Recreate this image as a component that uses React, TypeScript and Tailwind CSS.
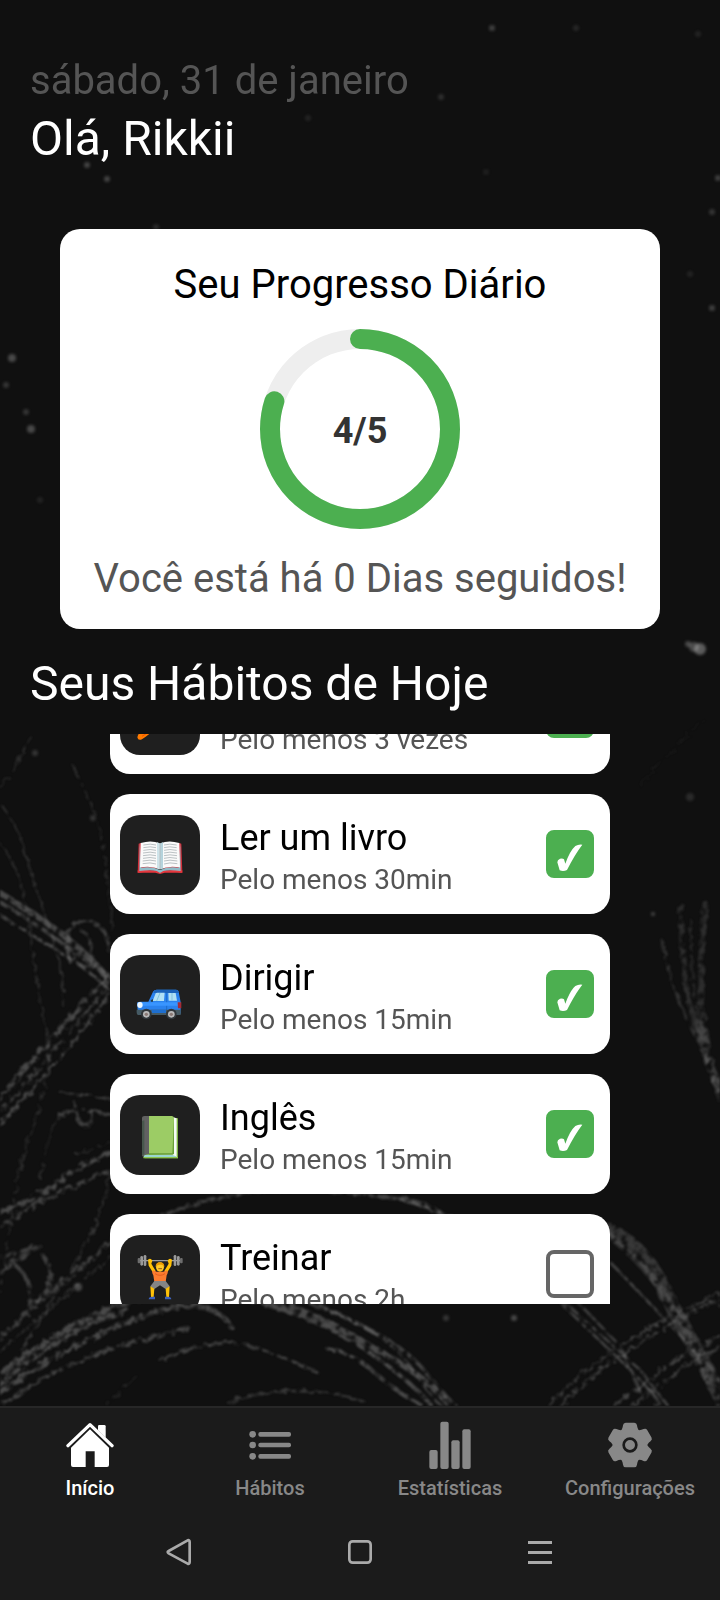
import React, { useLayoutEffect, useRef, useState } from 'react';

type Stroke = { d: string; w?: number; o?: number };

// Chalk lines on the blackboard behind the page
const strands: Stroke[] = [
  { d: 'M0 787 L15 768 L30 737', o: 0.35 },
  { d: 'M0 803 Q18 826 24 848 T43 909 T60 966 T63 1006', o: 0.35 },
  { d: 'M0 843 Q22 868 30 931 T46 1030 T36 1116 T13 1204 T0 1292', o: 0.3 },
  { d: 'M72 764 L87 795 Q102 826 106 866 T112 930', o: 0.3 },
  { d: 'M0 893 C30 912 80 940 112 984', w: 5, o: 0.6 },
  { d: 'M0 902 C30 918 70 950 112 978', w: 3, o: 0.55 },
  { d: 'M0 915 C30 936 75 956 112 992', w: 2, o: 0.6 },
  { d: 'M0 1098 Q40 1050 112 972', w: 4, o: 0.6 },
  { d: 'M0 1112 Q52 1056 112 980', w: 2, o: 0.5 },
  { d: 'M0 1124 Q56 1066 112 992', w: 2, o: 0.6 },
  { d: 'M70 962 C60 928 78 918 92 922 S108 940 109 950', w: 3, o: 0.5 },
  { d: 'M80 930 Q92 934 91 952 Q98 972 84 966 Q68 962 78 950', w: 2, o: 0.45 },
  { d: 'M60 1092 L110 1099', o: 0.5 },
  { d: 'M57 1118 Q72 1104 110 1115', w: 2, o: 0.55 },
  { d: 'M74 1102 C80 1132 92 1132 92 1114 M77 1120 Q88 1136 92 1112', w: 2, o: 0.5 },
  { d: 'M55 1122 L46 1150 L40 1178', o: 0.3 },
  { d: 'M0 1212 Q42 1196 58 1182 T112 1152', w: 4, o: 0.6 },
  { d: 'M0 1226 Q30 1206 56 1194 T112 1170', w: 3, o: 0.55 },
  { d: 'M76 1154 L110 1143', o: 0.4 },
  { d: 'M110 1174 Q100 1222 78 1258 T20 1352', o: 0.4 },
  { d: 'M0 1272 Q20 1254 37 1250 C56 1262 54 1298 30 1304 Q34 1280 14 1264', w: 3, o: 0.5 },
  { d: 'M0 1258 L40 1245', w: 2, o: 0.5 },
  { d: 'M0 1338 Q40 1300 72 1274 T112 1240 Q220 1180 330 1190 T440 1216', w: 4, o: 0.5 },
  { d: 'M0 1352 Q40 1316 112 1256', o: 0.4 },
  { d: 'M0 1376 Q54 1330 112 1308 C190 1274 280 1296 338 1328 S426 1376 450 1406', w: 5, o: 0.6 },
  { d: 'M0 1384 Q62 1332 126 1310', w: 4, o: 0.6 },
  { d: 'M0 1392 Q66 1346 138 1318 T232 1328', w: 4, o: 0.6 },
  { d: 'M4 1404 Q60 1362 134 1342 T180 1330', w: 3, o: 0.55 },
  { d: 'M250 1300 Q320 1318 366 1350 T432 1406', w: 3, o: 0.6 },
  { d: 'M320 1306 Q400 1340 424 1370 T456 1406', w: 3, o: 0.55 },
  { d: 'M310 1304 Q384 1328 410 1366 T442 1406', w: 2, o: 0.5 },
  { d: 'M160 1360 Q210 1338 240 1344 T318 1373', w: 2, o: 0.55 },
  { d: 'M324 1348 Q352 1352 374 1372 T420 1404', w: 3, o: 0.6 },
  { d: 'M228 1402 Q300 1380 364 1402', w: 2, o: 0.4 },
  { d: 'M106 1404 L136 1376', o: 0.25 },
  { d: 'M400 1200 Q470 1216 520 1264 T620 1360 T656 1406', w: 2, o: 0.5 },
  { d: 'M540 1280 L640 1370 L668 1406', w: 2, o: 0.5 },
  { d: 'M566 1290 L620 1346 L640 1392', w: 2, o: 0.45 },
  { d: 'M548 1406 Q586 1362 662 1322 T720 1296', w: 2, o: 0.5 },
  { d: 'M560 1406 Q600 1366 664 1328 T720 1306', w: 2, o: 0.5 },
  { d: 'M614 1406 L682 1356 L720 1336', w: 2, o: 0.55 },
  { d: 'M632 1406 L690 1362 L720 1348', w: 2, o: 0.5 },
  { d: 'M610 1262 Q652 1306 700 1356 T716 1406', w: 2, o: 0.5 },
  { d: 'M610 1231 Q642 1246 660 1282 T696 1350 T720 1396', w: 14, o: 0.42 },
  { d: 'M610 1236 Q646 1264 672 1306 T708 1380', w: 6, o: 0.35 },
  { d: 'M681 905 Q680 984 700 1041 T720 1100', w: 4, o: 0.3 },
  { d: 'M706 905 Q696 984 706 1040 T720 1082', w: 5, o: 0.3 },
  { d: 'M700 1020 Q704 1060 722 1090', w: 8, o: 0.35 },
  { d: 'M691 920 Q690 984 702 1040', w: 2, o: 0.25 },
  { d: 'M662 940 Q670 986 690 1026 T718 1092', w: 2, o: 0.35 },
  { d: 'M640 786 Q680 740 704 720', o: 0.1 },
];

// Dust on the blackboard: x, y, radius, opacity
const specks: number[][] = [
  [492, 28, 3, 0.25], [576, 28, 3, 0.12], [441, 97, 3, 0.16], [308, 118, 3, 0.1],
  [87, 165, 3, 0.28], [107, 179, 3, 0.28], [156, 227, 3, 0.14], [698, 34, 3, 0.1],
  [718, 178, 3, 0.25], [712, 212, 3, 0.2], [690, 274, 3, 0.1], [486, 172, 3, 0.08],
  [12, 358, 4, 0.3], [6, 385, 3, 0.2], [31, 429, 4, 0.3], [26, 412, 3, 0.2],
  [700, 649, 6, 0.4], [694, 647, 5, 0.3], [688, 644, 3, 0.3], [712, 308, 3, 0.25],
  [40, 500, 3, 0.1], [690, 797, 4, 0.14], [653, 914, 2, 0.3], [514, 1318, 3, 0.3],
  [446, 1318, 3, 0.2], [35, 753, 3, 0.2], [93, 818, 3, 0.2], [78, 1287, 4, 0.3],
];

const ChalkBoard = () => (
  <svg
    className="absolute inset-0 h-full w-full"
    viewBox="0 0 720 1406"
    preserveAspectRatio="xMidYMax slice"
    aria-hidden="true"
  >
    <defs>
      <filter id="chalk" x="0" y="0" width="720" height="1406" filterUnits="userSpaceOnUse">
        <feTurbulence type="fractalNoise" baseFrequency="0.14" numOctaves="3" seed="7" result="noise" />
        <feDisplacementMap in="SourceGraphic" in2="noise" scale="7" result="rough" />
        <feColorMatrix in="noise" type="matrix" values="0 0 0 0 0  0 0 0 0 0  0 0 0 0 0  0 3.5 0 0 -1" result="grain" />
        <feComposite in="rough" in2="grain" operator="in" />
        <feGaussianBlur stdDeviation="1" />
      </filter>
      <filter id="dust" x="0" y="0" width="720" height="1406" filterUnits="userSpaceOnUse">
        <feGaussianBlur stdDeviation="1.4" />
      </filter>
    </defs>
    <g filter="url(#chalk)" fill="none" stroke="#707070" strokeLinecap="round">
      {strands.map((s, i) => (
        <path key={i} d={s.d} strokeWidth={(s.w ?? 1) + 1} opacity={s.o} />
      ))}
    </g>
    <g filter="url(#dust)" fill="#cccccc">
      {specks.map(([x, y, r, o], i) => (
        <circle key={i} cx={x} cy={y} r={r} opacity={o} />
      ))}
    </g>
  </svg>
);

const CarrotIcon = () => (
  <svg viewBox="0 0 240 240" className="h-20 w-20" aria-hidden="true">
    <path d="M150 82 Q174 52 184 80 Q196 88 160 100Z" fill="#4caf50" />
    <path d="M52 187 Q58 160 128 94 Q150 82 158 100 Q160 116 140 130 Q90 178 66 193 Q54 198 52 187Z" fill="#ff7a00" />
    <path d="M66 184 L84 172" stroke="#e65100" strokeWidth="3" />
  </svg>
);

const BookIcon = () => (
  <svg viewBox="0 0 240 240" className="h-20 w-20" aria-hidden="true">
    <path d="M56 86 L62 84 L112 160 L60 173 L53 173Z" fill="#d32f3a" />
    <path d="M184 86 L178 84 L128 160 L180 173 L187 173Z" fill="#d32f3a" />
    <path d="M53 166 H108 L120 172 L132 166 H187 V173 H134 L120 177 L106 173 H53Z" fill="#e5373e" />
    <path d="M59 84 L64 158 Q96 154 118 164 L122 164 Q144 154 176 158 L181 84 L182 168 Q148 164 130 168 L120 174 L110 168 Q92 164 58 168Z" fill="#90bcc8" />
    <path d="M62 84 Q94 74 119 85 V163 Q96 151 60 157Z" fill="#fafafa" />
    <path d="M178 84 Q146 74 121 85 V163 Q144 151 180 157Z" fill="#fafafa" />
    <path d="M111 82 L119 85 V163 L111 160Z" fill="#cfe4ea" />
    <path d="M129 82 L121 85 V163 L129 160Z" fill="#b5d3dc" />
    <g fill="none" stroke="#9aa3a8" strokeWidth="2">
      <path d="M70 90 Q92 85 108 90 M70 98 Q92 93 108 98 M70 106 Q92 101 108 106 M69 114 Q92 109 108 114 M69 122 Q92 117 108 122 M69 130 Q92 125 108 130 M68 138 Q92 133 108 138 M68 146 Q92 141 108 147" />
      <path d="M132 90 Q148 85 170 90 M132 98 Q148 93 170 98 M132 106 Q148 101 170 106 M132 114 Q148 109 171 114 M132 122 Q148 117 171 122 M132 130 Q148 125 171 130 M132 138 Q148 133 172 138 M132 147 Q148 141 172 146" />
    </g>
  </svg>
);

const CarIcon = () => (
  <svg viewBox="0 0 240 240" className="h-20 w-20" aria-hidden="true">
    <path d="M85 140 L99 110 Q102 104 110 104 H168 Q175 104 176 110 L182 142 V176 H54 L51 146 Q53 140 60 140Z" fill="#2a82ee" />
    <path d="M110 104 H168 Q175 104 176 110 L177 114 H100 Q103 104 110 104Z" fill="#1b63bb" />
    <path d="M98 138 L107 115 Q108 113 112 113 H134 L132 138Z" fill="#b0e0f5" />
    <path d="M145 114 H167 L171 137 H146Z" fill="#b0e0f5" />
    <path d="M120 114 L110 138 M156 114 L156 137" stroke="#81c3df" strokeWidth="3" />
    <path d="M140 112 V172" stroke="#1762b9" strokeWidth="2" />
    <path d="M52 142 H182 V152 H52Z" fill="#3995ff" />
    <path d="M50 164 H182 V180 H54 Q49 178 50 164Z" fill="#455a64" />
    <path d="M94 164 H138 V174 H96Z" fill="#1e6fd0" />
    <ellipse cx="60" cy="150" rx="8" ry="9" fill="#eef8ff" />
    <path d="M173 142 H184 V160 H174Z" fill="#a52c37" />
    <path d="M92 136 L99 132 V140 H93Z" fill="#27414f" />
    <circle cx="79" cy="177" r="16" fill="#31373b" />
    <circle cx="154" cy="177" r="16" fill="#31373b" />
    <circle cx="79" cy="178" r="10" fill="#b9b9b9" />
    <circle cx="154" cy="178" r="10" fill="#b9b9b9" />
    <circle cx="79" cy="178" r="5" fill="#8b7a76" />
    <circle cx="154" cy="178" r="5" fill="#8b7a76" />
  </svg>
);

const GreenBookIcon = () => (
  <svg viewBox="0 0 240 240" className="h-20 w-20" aria-hidden="true">
    <path d="M160 68 L174 70 V190 H70 V180Z" fill="#7cb342" />
    <path d="M160 67 L170 70 V186 H72 V180 L158 178Z" fill="#f5fbf5" />
    <path d="M72 180 H158 L168 184 V187 H72Z" fill="#9ad6cf" />
    <path d="M66 70 Q66 63 74 63 H88 V178 Q74 176 70 186 L66 182Z" fill="#616161" />
    <path d="M66 78 L73 76 V177 L66 182Z" fill="#47574c" />
    <path d="M87 63 H156 Q162 64 162 71 V176 H87Z" fill="#9ccc65" />
    <path d="M162 70 V176 Q160 179 156 179 H87 V175 H157Z" fill="#689f38" />
    <path d="M70 186 H174 V190 H74Z" fill="#8bc34a" />
  </svg>
);

const LifterIcon = () => (
  <svg viewBox="0 0 240 240" className="h-20 w-20" aria-hidden="true">
    <path d="M56 77 H184" stroke="#9e9e9e" strokeWidth="4" />
    <g fill="#6d6d6d">
      <rect x="53" y="69" width="8" height="16" rx="3" />
      <rect x="180" y="69" width="8" height="16" rx="3" />
    </g>
    <g fill="#9a9a9a">
      <rect x="61" y="63" width="8" height="29" rx="4" />
      <rect x="71" y="60" width="8" height="33" rx="4" />
      <rect x="161" y="60" width="8" height="33" rx="4" />
      <rect x="171" y="63" width="8" height="29" rx="4" />
    </g>
    <path d="M84 74 Q92 68 97 77 L94 86 L107 108 L101 116 L86 92Z" fill="#ffc107" />
    <path d="M156 74 Q148 68 143 77 L146 86 L133 108 L139 116 L154 92Z" fill="#ffc107" />
    <path d="M99 106 L110 110 H130 L141 106 Q146 112 140 121 L137 141 H103 L100 121 Q94 112 99 106Z" fill="#fb7c2f" />
    <path d="M105 116 Q120 126 135 116" stroke="#e65d1e" strokeWidth="3" fill="none" />
    <ellipse cx="120" cy="96" rx="12" ry="14" fill="#ffca28" />
    <path d="M107 97 Q106 82 120 82 Q134 82 133 97 Q128 87 120 89 Q110 88 107 97Z" fill="#ed9b00" />
    <path d="M115 101 H126" stroke="#9c5b1e" strokeWidth="3" />
    <path d="M103 138 H137 L149 154 L138 163 L120 151 L102 163 L91 154Z" fill="#858585" />
    <path d="M91 154 L103 161 L101 186 H93Z" fill="#ffc107" />
    <path d="M149 154 L137 161 L139 186 H147Z" fill="#ffc107" />
    <path d="M86 193 Q86 186 96 185 H105 V193Z" fill="#3d62bd" />
    <path d="M154 193 Q154 186 144 185 H135 V193Z" fill="#3d62bd" />
  </svg>
);

const HomeIcon = () => (
  <svg viewBox="0 0 144 144" className="h-12 w-12" fill="currentColor" aria-hidden="true">
    <path d="M6 74 L72 11 L138 74" fill="none" stroke="currentColor" strokeWidth="10" strokeLinecap="round" strokeLinejoin="round" />
    <path d="M96 16 Q96 12 100 12 H115 Q119 12 119 16 V50 L96 28Z" />
    <path d="M72 25 L129 80 V132 Q129 138 123 138 H86 V91 H59 V138 H21 Q15 138 15 132 V80Z" />
  </svg>
);

const ListIcon = () => (
  <svg viewBox="0 0 144 144" className="h-12 w-12" fill="currentColor" aria-hidden="true">
    <circle cx="20" cy="40" r="10" />
    <circle cx="20" cy="72" r="10" />
    <circle cx="20" cy="106" r="10" />
    <rect x="37" y="33" width="98" height="14" rx="6" />
    <rect x="37" y="65" width="98" height="14" rx="6" />
    <rect x="37" y="99" width="98" height="14" rx="6" />
  </svg>
);

const BarsIcon = () => (
  <svg viewBox="0 0 144 144" className="h-12 w-12" fill="currentColor" aria-hidden="true">
    <rect x="10" y="87" width="25" height="57" rx="6" />
    <rect x="43" y="2" width="25" height="142" rx="6" />
    <rect x="76" y="58" width="25" height="86" rx="6" />
    <rect x="109" y="25" width="25" height="119" rx="6" />
  </svg>
);

const GearIcon = () => (
  <svg viewBox="0 0 144 144" className="h-12 w-12" fill="currentColor" aria-hidden="true">
    <circle cx="72" cy="72" r="50" />
    {[0, 60, 120, 180, 240, 300].map((angle) => (
      <path
        key={angle}
        d="M40 34 Q50 26 51 13 Q52 5 59 5 H85 Q92 5 93 13 Q94 26 104 34 L72 60Z"
        transform={`rotate(${angle} 72 72)`}
      />
    ))}
    <circle cx="72" cy="72" r="19" fill="none" stroke="#1b1b1b" strokeWidth="8" />
  </svg>
);

const initialHabits = [
  { id: 'fruta', name: 'Comer fruta', goal: 'Pelo menos 3 vezes', icon: <CarrotIcon />, done: true },
  { id: 'livro', name: 'Ler um livro', goal: 'Pelo menos 30min', icon: <BookIcon />, done: true },
  { id: 'dirigir', name: 'Dirigir', goal: 'Pelo menos 15min', icon: <CarIcon />, done: true },
  { id: 'ingles', name: 'Inglês', goal: 'Pelo menos 15min', icon: <GreenBookIcon />, done: true },
  { id: 'treinar', name: 'Treinar', goal: 'Pelo menos 2h', icon: <LifterIcon />, done: false },
];

const tabs = [
  { name: 'Início', icon: <HomeIcon />, active: true },
  { name: 'Hábitos', icon: <ListIcon />, active: false },
  { name: 'Estatísticas', icon: <BarsIcon />, active: false },
  { name: 'Configurações', icon: <GearIcon />, active: false },
];

const ProgressRing = ({ done, total }: { done: number; total: number }) => (
  <div className="relative h-[200px] w-[200px]">
    <svg viewBox="0 0 200 200" className="h-full w-full -rotate-90" fill="none" strokeWidth="20" aria-hidden="true">
      <circle cx="100" cy="100" r="90" stroke="#eeeeee" />
      <circle
        cx="100"
        cy="100"
        r="90"
        stroke="#4caf50"
        strokeLinecap="round"
        pathLength={100}
        strokeDasharray={`${(done / total) * 100} 100`}
      />
    </svg>
    <span className="absolute inset-0 flex items-center justify-center pt-1 text-4xl font-bold text-[#333333]">
      {done}/{total}
    </span>
  </div>
);

const App = () => {
  const [habits, setHabits] = useState(initialHabits);
  const listRef = useRef<HTMLUListElement>(null);
  const doneCount = habits.filter((h) => h.done).length;

  // The first habit starts partly scrolled out of view
  useLayoutEffect(() => {
    if (listRef.current) listRef.current.scrollTop = 80;
  }, []);

  const toggle = (id: string) => {
    setHabits(habits.map((h) => (h.id === id ? { ...h, done: !h.done } : h)));
  };

  return (
    <div className="flex h-screen flex-col bg-[#1b1b1b] font-['Roboto',sans-serif]">
      <main className="relative flex min-h-0 flex-1 flex-col bg-[#101010]">
        <ChalkBoard />

        <header className="relative px-[30px] pt-14">
          <p className="text-[40px] leading-[50px] text-[#555555]">sábado, 31 de janeiro</p>
          <h1 className="mt-[3px] text-5xl leading-[60px] text-white">Olá, Rikkii</h1>
        </header>

        <section className="relative mx-[60px] mt-[60px] flex h-[400px] shrink-0 flex-col items-center rounded-[20px] bg-white pt-[31px]">
          <h2 className="mb-[19px] text-[40px] leading-[50px] text-black">Seu Progresso Diário</h2>
          <ProgressRing done={doneCount} total={habits.length} />
          <p className="mt-[25px] text-[40px] leading-[50px] text-[#555555]">Você está há 0 Dias seguidos!</p>
        </section>

        <h2 className="relative mt-[25px] px-[30px] text-5xl leading-[60px] text-white">Seus Hábitos de Hoje</h2>

        <ul
          ref={listRef}
          className="relative mx-auto mt-5 mb-[102px] flex min-h-0 w-full max-w-[500px] flex-1 flex-col gap-5 overflow-y-auto pb-5 [scrollbar-width:none]"
        >
          {habits.map((habit) => (
            <li key={habit.id} className="flex h-[120px] shrink-0 items-center rounded-[20px] bg-white pr-4 pl-2.5">
              <div className="mt-0.5 h-20 w-20 shrink-0 overflow-hidden rounded-[20px] bg-[#1f1f1f]">{habit.icon}</div>
              <label htmlFor={habit.id} className="ml-5 flex-1 pt-2">
                <span className="block text-4xl leading-[44px] text-black">{habit.name}</span>
                <span className="block text-[28px] leading-10 text-[#555555]">{habit.goal}</span>
              </label>
              <div className="relative h-12 w-12">
                <input
                  id={habit.id}
                  type="checkbox"
                  checked={habit.done}
                  onChange={() => toggle(habit.id)}
                  className="block h-12 w-12 appearance-none rounded-lg border-4 border-[#666666] bg-white checked:border-[#4caf50] checked:bg-[#4caf50]"
                />
                {habit.done && (
                  <svg viewBox="0 0 144 144" className="pointer-events-none absolute inset-0 h-12 w-12" fill="#ffffff" aria-hidden="true">
                    <path d="M34 97 Q34 89 42 86 Q50 84 54 88 L58 101 Q72 62 88 48 Q98 42 109 44 Q86 74 63 120 Q52 126 41 121Z" />
                  </svg>
                )}
              </div>
            </li>
          ))}
        </ul>
      </main>

      <nav className="grid shrink-0 grid-cols-4 border-t-2 border-[#272727] pt-[13px] pb-1">
        {tabs.map((tab) => (
          <a
            key={tab.name}
            href="#"
            className={`flex flex-col items-center gap-[7px] text-xl leading-6 font-medium ${
              tab.active ? 'text-white' : 'text-[#888888]'
            }`}
          >
            {tab.icon}
            {tab.name}
          </a>
        ))}
      </nav>

      {/* Android navigation bar */}
      <div className="flex h-24 shrink-0 items-center justify-center px-[90px] text-[#aaaaaa]">
        <button aria-label="Voltar" className="flex flex-1 justify-center">
          <svg viewBox="0 0 84 84" className="h-7 w-7" fill="none" stroke="currentColor" strokeWidth="8" strokeLinejoin="round">
            <path d="M8 39 L65 7 Q71 5 71 12 V72 Q71 79 65 77 L8 46 Q2 42 8 39Z" />
          </svg>
        </button>
        <button aria-label="Tela inicial" className="flex flex-1 justify-center">
          <svg viewBox="0 0 84 84" className="h-7 w-7" fill="none" stroke="currentColor" strokeWidth="8">
            <rect x="10" y="10" width="64" height="64" rx="10" />
          </svg>
        </button>
        <button aria-label="Recentes" className="flex flex-1 justify-center">
          <svg viewBox="0 0 84 84" className="h-7 w-7" fill="currentColor">
            <rect x="6" y="9" width="72" height="9" />
            <rect x="6" y="39" width="72" height="9" />
            <rect x="6" y="69" width="72" height="9" />
          </svg>
        </button>
      </div>
    </div>
  );
};

export default App;
